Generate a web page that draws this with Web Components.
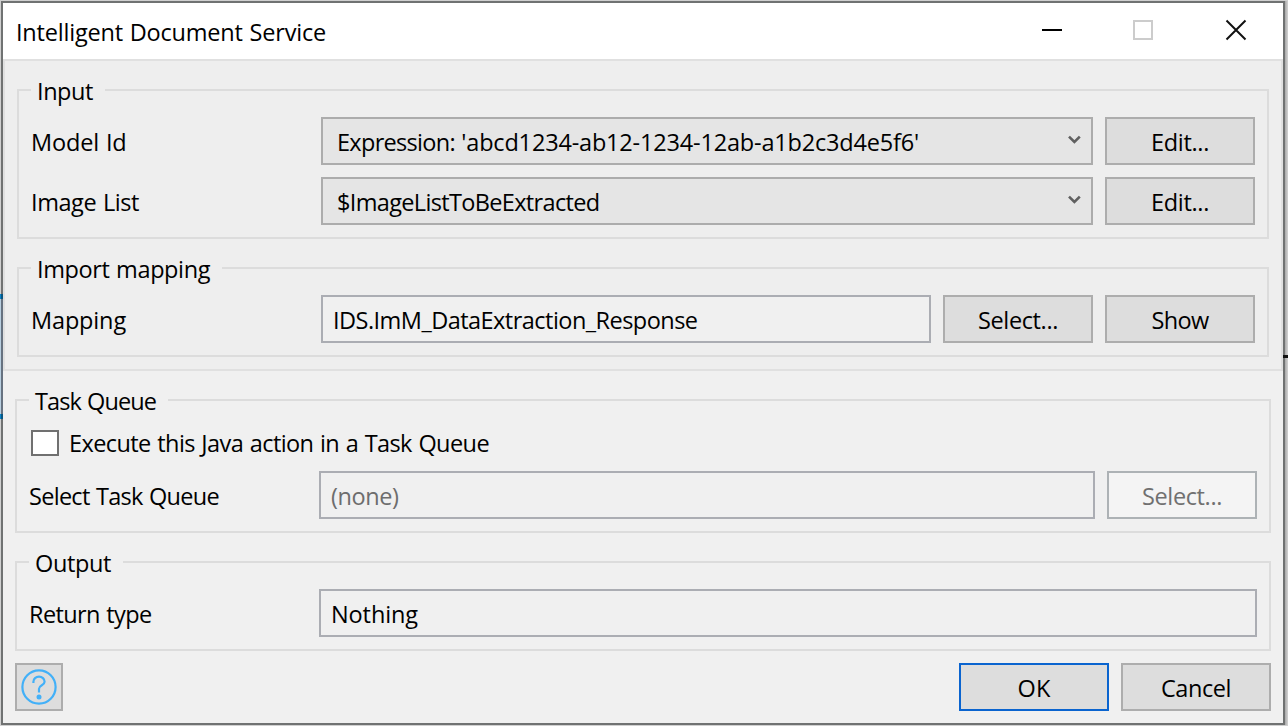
<!DOCTYPE html>
<html lang="en">
<head>
<meta charset="utf-8">
<title>Intelligent Document Service</title>
<style>
html,body{margin:0;height:100%;overflow:hidden}
body{font:23.5px/32px "Open Sans","Noto Sans",sans-serif;color:#000;background:#d2d2d2}
</style>
</head>
<body>
<ids-dialog></ids-dialog>
<script>
const define=(name,css,html,init)=>{
  const t=document.createElement('template');
  t.innerHTML=`<style>*{box-sizing:border-box}${css}</style>${html}`;
  customElements.define(name,class extends HTMLElement{
    constructor(){super();this.attachShadow({mode:'open'}).append(t.content.cloneNode(true));}
    connectedCallback(){if(init)init(this,this.shadowRoot);}
  });
};

// A single line of text whose tracking is adjusted so it spans `w` pixels.
define('ui-text',`:host{display:block;white-space:pre;height:32px;line-height:32px;flex:none}span{display:inline-block;word-spacing:1px}`,
`<span><slot></slot></span>`,(el,r)=>{
  const s=r.querySelector('span'),w=+el.getAttribute('w'),n=el.textContent.length;
  let d=0;
  el.style.width=w+'px';
  for(let i=0;i<6;i++){
    s.style.letterSpacing=d+'px';
    d+=(w-s.getBoundingClientRect().width)/n;
  }
  s.style.letterSpacing=d+'px';
});

define('ui-group',`:host{display:block;border:solid #dcdcdc;border-width:0 2px 2px}
.top{display:flex;height:2px;margin:0 -2px}
.a{width:14px;background:#dcdcdc;flex:none}.b{flex:1;background:#dcdcdc}
.legend{display:flex;align-items:center;height:2px;padding:2px 12px 0 6px}
.body{display:flex;flex-direction:column;gap:12px;padding:26px 12px 12px}`,
`<div class="top"><i class="a"></i><div class="legend"><slot name="legend"></slot></div><i class="b"></i></div><div class="body"><slot></slot></div>`);

define('ui-row',`:host{display:flex;gap:12px;height:48px}
.label{width:290px;margin-right:-12px;display:flex;align-items:center;flex:none;padding-top:2px}`,
`<div class="label"><slot name="label"></slot></div><slot></slot>`);

define('ui-field',`:host{box-sizing:border-box;display:flex;align-items:center;flex:1;height:48px;border:2px solid #abadb3;background:#f0f0f0;padding:2px 10px 0}
:host([disabled]){color:#6d6d6d}`,`<slot></slot>`);

define('ui-select',`:host{box-sizing:border-box;display:flex;align-items:center;justify-content:space-between;flex:1;height:48px;border:2px solid #acacac;background:#e5e5e5;padding:2px 10px 0 14px}
svg{margin-top:-5px;flex:none}`,
`<slot></slot><svg width="13" height="10" viewBox="0 0 13 10"><path d="M1 1.6 6.4 7 11.8 1.6" fill="none" stroke="#606060" stroke-width="2.6"/></svg>`);

define('ui-button',`:host{box-sizing:border-box;display:flex;align-items:center;justify-content:center;flex:none;width:150px;height:48px;border:2px solid #adadad;background:#ddd;padding-top:2px}
:host([primary]){border-color:#0a64cf}
:host([icon]){width:48px;padding:0}
:host([disabled]){border-color:#adb2b5;background:#f4f4f4;color:#707070}`,`<slot></slot>`);

define('ui-check',`:host{display:flex;align-items:center;gap:10px;height:32px;padding-left:2px}
i{width:28px;height:26px;border:2px solid #707070;background:#fff}`,`<i></i><slot></slot>`);

define('ui-titlebar',`:host{display:flex;align-items:center;justify-content:space-between;height:56px;background:#fff;padding:0 36px 0 13px}
::slotted(*){margin-top:2px}
.c{display:flex;align-items:center;margin-top:-2px}svg{display:block}
svg+svg{margin-left:71px}svg:last-child{margin-left:72px}`,
`<slot></slot><div class="c">
<svg width="20" height="20"><path d="M0 10H20" stroke="#000" stroke-width="2"/></svg>
<svg width="20" height="20"><rect x="1" y="1" width="18" height="18" fill="none" stroke="#ccc" stroke-width="2"/></svg>
<svg width="22" height="22"><path d="M1.5 1.5 20.5 20.5M20.5 1.5 1.5 20.5" stroke="#111" stroke-width="2"/></svg></div>`);

define('ids-dialog',`:host{display:flex;height:100vh;box-sizing:border-box;padding:1px 0 1px 0;background:#d0d0d0}
.left{width:1px;flex:none;padding-top:293px}
.left i,.left b{display:block;width:3px;position:relative}.left b{height:5px;background:linear-gradient(90deg,#0a84c8 1px,#0b5580 1px)}.left i{height:115px;background:linear-gradient(90deg,#b9cfe0 1px,#667280 1px)}
.right{flex:1;padding-top:354px;background:linear-gradient(90deg,#a8a8a8,#d4d4d4)}
.right i{display:block;height:3px;margin-left:-2px;background:#111}
.win{width:1284px;height:724px;flex:none;border:2px solid #707272;background:#f0f0f0}
.panel{border:2px solid #e0e0e0;background:#eee;padding:28px 12px 12px;height:312px;display:flex;flex-direction:column;gap:28px}
.lower{padding:28px 12px 12px}
.lower ui-group+ui-group{margin-top:28px}
.prefix{letter-spacing:-.7px}
.foot{display:flex;gap:12px;margin-top:12px}.foot .sp{flex:1}`,
`<div class="left"><b></b><i></i><b></b></div>
<div class="win">
<ui-titlebar><ui-text w="310">Intelligent Document Service</ui-text></ui-titlebar>
<div class="panel">
<ui-group><ui-text slot="legend" w="56">Input</ui-text>
<ui-row><ui-text slot="label" w="95.5">Model Id</ui-text><ui-select><ui-text w="582"><span class="prefix">Expression: </span>'abcd1234-ab12-1234-12ab-a1b2c3d4e5f6'</ui-text></ui-select><ui-button><ui-text w="58">Edit...</ui-text></ui-button></ui-row>
<ui-row><ui-text slot="label" w="108">Image List</ui-text><ui-select><ui-text w="262.5">$ImageListToBeExtracted</ui-text></ui-select><ui-button><ui-text w="58">Edit...</ui-text></ui-button></ui-row>
</ui-group>
<ui-group><ui-text slot="legend" w="173">Import mapping</ui-text>
<ui-row><ui-text slot="label" w="95">Mapping</ui-text><ui-field><ui-text w="364.5">IDS.ImM_DataExtraction_Response</ui-text></ui-field><ui-button><ui-text w="80">Select...</ui-text></ui-button><ui-button><ui-text w="57">Show</ui-text></ui-button></ui-row>
</ui-group>
</div>
<div class="lower">
<ui-group><ui-text slot="legend" w="121">Task Queue</ui-text>
<ui-check><ui-text w="420">Execute this Java action in a Task Queue</ui-text></ui-check>
<ui-row><ui-text slot="label" w="190">Select Task Queue</ui-text><ui-field disabled><ui-text w="67.5">(none)</ui-text></ui-field><ui-button disabled><ui-text w="80">Select...</ui-text></ui-button></ui-row>
</ui-group>
<ui-group><ui-text slot="legend" w="76">Output</ui-text>
<ui-row><ui-text slot="label" w="122.5">Return type</ui-text><ui-field><ui-text w="87">Nothing</ui-text></ui-field></ui-row>
</ui-group>
<div class="foot"><ui-button icon><svg width="36" height="36" viewBox="0 0 36 36" fill="none" stroke="#42b0f8" stroke-width="2.2"><circle cx="18" cy="18" r="16.6"/><path d="M12.4 14v-1.2a5.6 5.2 0 0 1 11.2 0c0 3.6-5.6 3.3-5.6 7v3.6"/><circle cx="18" cy="28" r="2.5" fill="#42b0f8" stroke="none"/></svg></ui-button><div class="sp"></div>
<ui-button primary><ui-text w="33">OK</ui-text></ui-button><ui-button><ui-text w="70">Cancel</ui-text></ui-button></div>
</div>
</div>
<div class="right"><i></i></div>`);
</script>
</body>
</html>
